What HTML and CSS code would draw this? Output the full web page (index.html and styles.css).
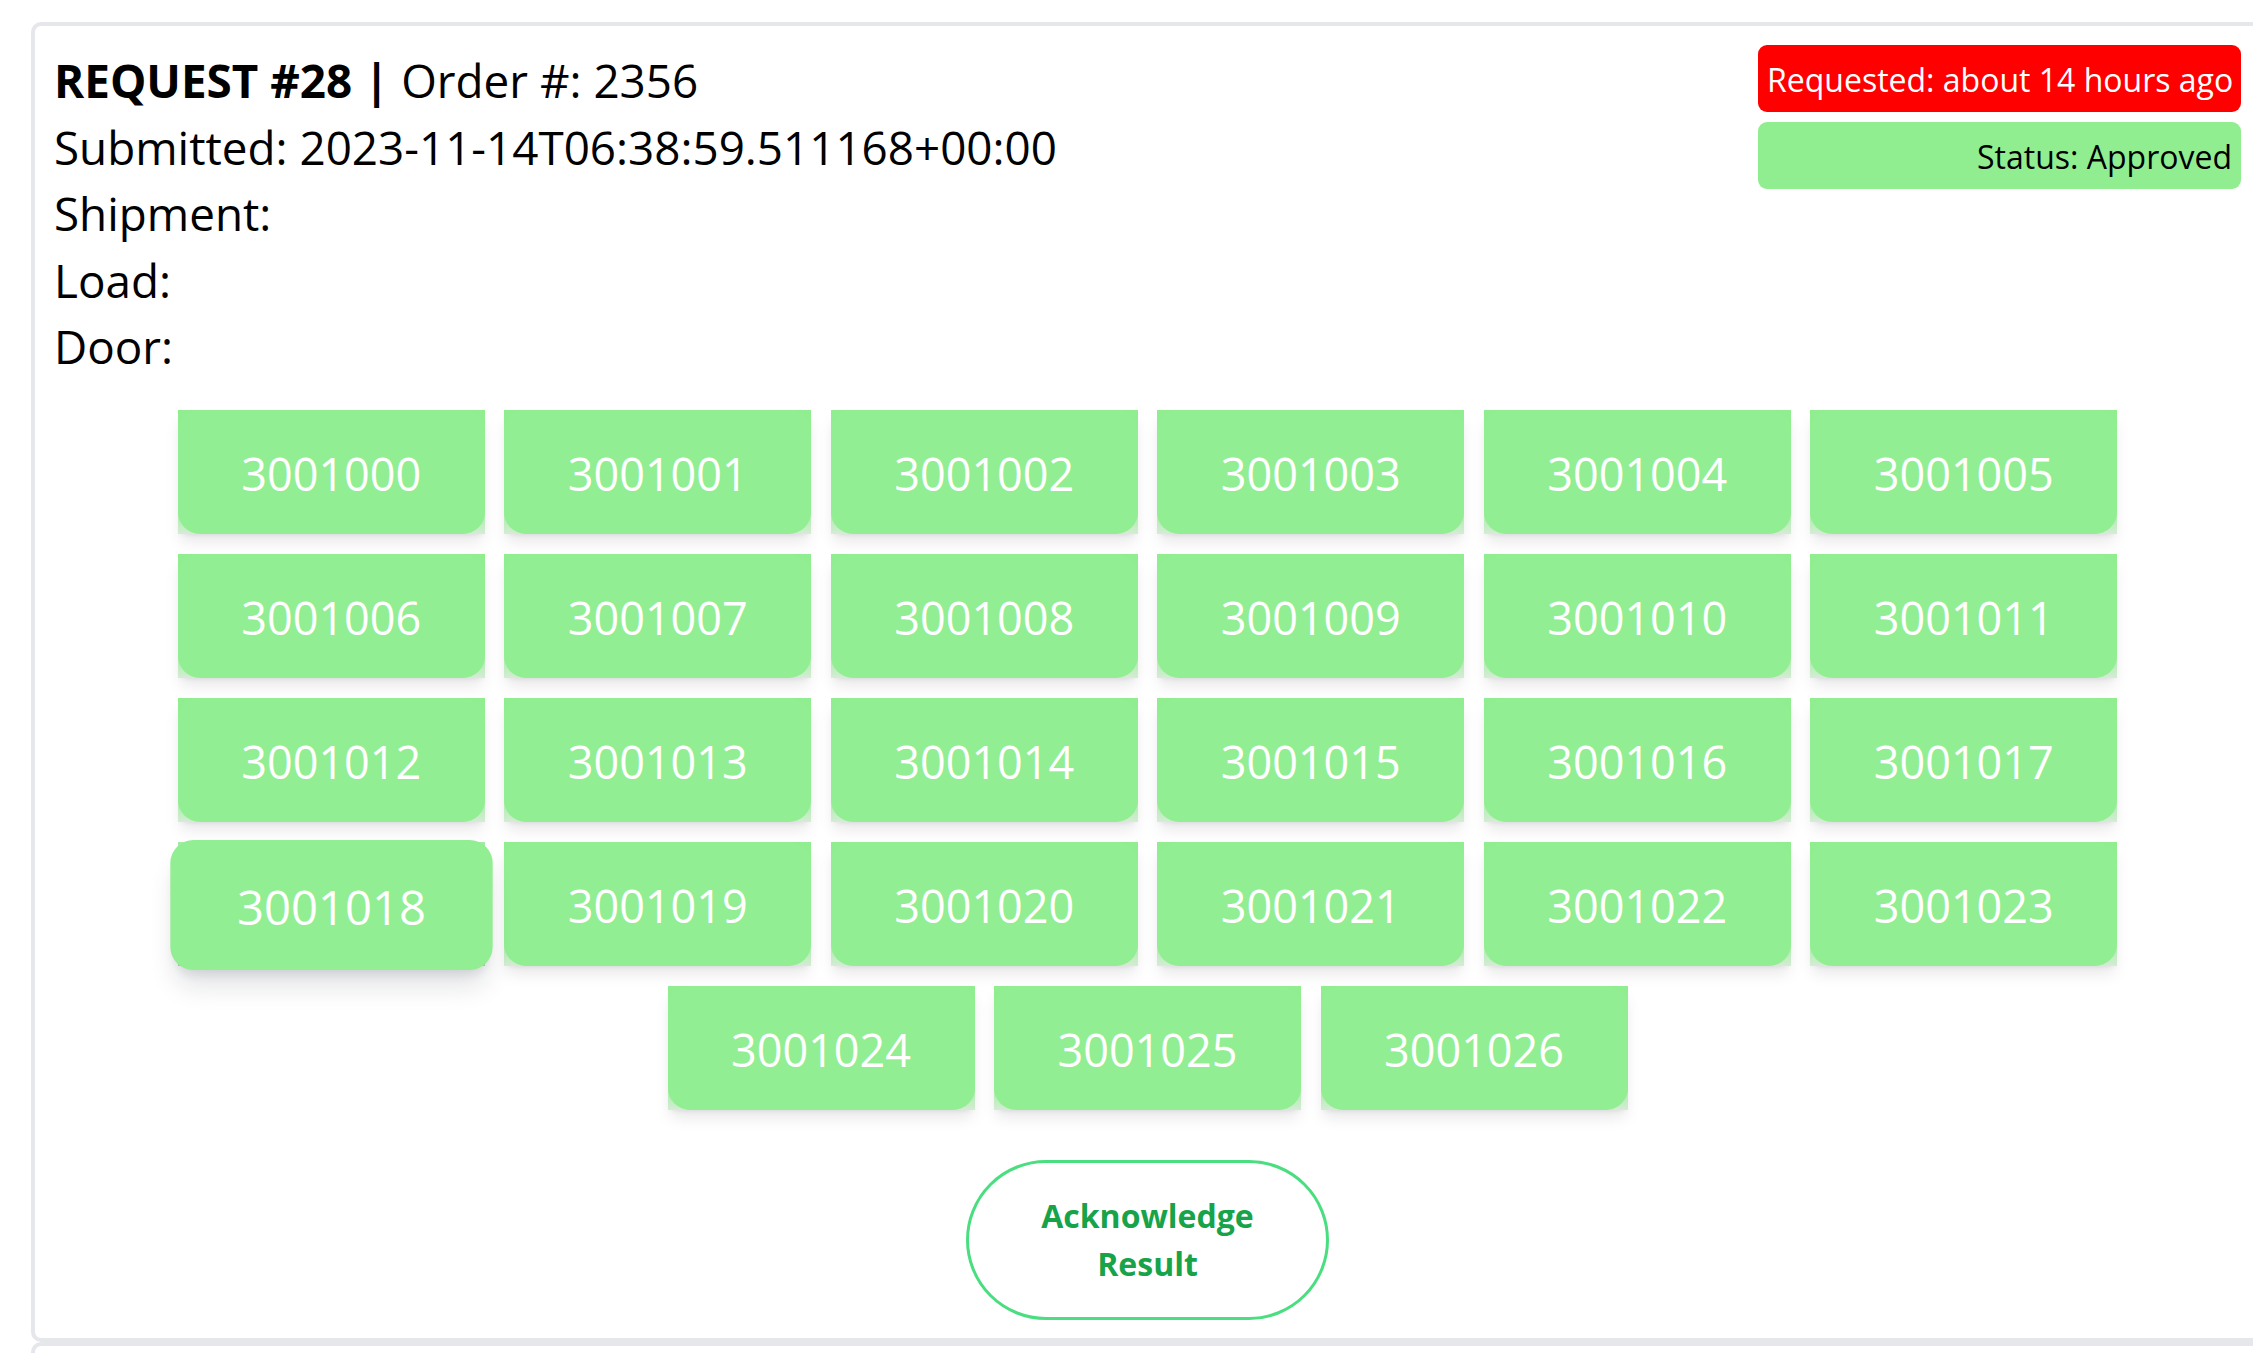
FILE: index.html
```html
<!DOCTYPE html>
<html lang="en">
<head>
<meta charset="utf-8">
<title>Request #28</title>
<link rel="stylesheet" href="styles.css">
</head>
<body>
<div class="page">
  <div class="card">
    <div class="header">
      <div class="info">
        <div class="line"><span class="strong">REQUEST #28 |</span> Order #: 2356</div>
        <div class="line">Submitted: 2023-11-14T06:38:59.511168+00:00</div>
        <div class="line">Shipment:</div>
        <div class="line">Load:</div>
        <div class="line">Door:</div>
      </div>
      <div class="badges">
        <div class="badge badge-red">Requested: about 14 hours ago</div>
        <div class="badge badge-green">Status: Approved</div>
      </div>
    </div>
    <div class="grid">
      <div class="cell"><div class="cell-inner">3001000</div></div>
      <div class="cell"><div class="cell-inner">3001001</div></div>
      <div class="cell"><div class="cell-inner">3001002</div></div>
      <div class="cell"><div class="cell-inner">3001003</div></div>
      <div class="cell"><div class="cell-inner">3001004</div></div>
      <div class="cell"><div class="cell-inner">3001005</div></div>
      <div class="cell"><div class="cell-inner">3001006</div></div>
      <div class="cell"><div class="cell-inner">3001007</div></div>
      <div class="cell"><div class="cell-inner">3001008</div></div>
      <div class="cell"><div class="cell-inner">3001009</div></div>
      <div class="cell"><div class="cell-inner">3001010</div></div>
      <div class="cell"><div class="cell-inner">3001011</div></div>
      <div class="cell"><div class="cell-inner">3001012</div></div>
      <div class="cell"><div class="cell-inner">3001013</div></div>
      <div class="cell"><div class="cell-inner">3001014</div></div>
      <div class="cell"><div class="cell-inner">3001015</div></div>
      <div class="cell"><div class="cell-inner">3001016</div></div>
      <div class="cell"><div class="cell-inner">3001017</div></div>
      <div class="cell cell-hover"><div class="cell-inner">3001018</div></div>
      <div class="cell"><div class="cell-inner">3001019</div></div>
      <div class="cell"><div class="cell-inner">3001020</div></div>
      <div class="cell"><div class="cell-inner">3001021</div></div>
      <div class="cell"><div class="cell-inner">3001022</div></div>
      <div class="cell"><div class="cell-inner">3001023</div></div>
      <div class="cell"><div class="cell-inner">3001024</div></div>
      <div class="cell"><div class="cell-inner">3001025</div></div>
      <div class="cell"><div class="cell-inner">3001026</div></div>
    </div>
    <div class="actions">
      <button class="ack" type="button">Acknowledge Result</button>
    </div>
  </div>
  <div class="card card-next"></div>
</div>
</body>
</html>
```

FILE: styles.css
```css
html, body {
  margin: 0;
  padding: 0;
  background: #ffffff;
  overflow: hidden;
}

body {
  font-family: "Open Sans", "Noto Sans", "Liberation Sans", sans-serif;
  color: #000000;
}

.page {
  padding: 22px 0 0 31px;
  width: 2231px;
}

.card {
  box-sizing: border-box;
  width: 2231px;
  border: 4px solid #e5e7eb;
  border-radius: 10px;
  padding: 19px 17px 18px 19px;
  background: #ffffff;
}

.card-next {
  height: 120px;
  padding: 0;
}

.header {
  display: flex;
  justify-content: space-between;
  align-items: flex-start;
}

.info {
  padding-top: 2px;
  font-size: 45.8px;
  line-height: 66.5px;
}

.line {
  white-space: nowrap;
}

.strong {
  font-weight: 700;
}

.badges {
  width: 483px;
  display: flex;
  flex-direction: column;
  gap: 10px;
}

.badge {
  box-sizing: border-box;
  height: 67px;
  border-radius: 9px;
  padding: 11px 9px 8px 9px;
  font-size: 32px;
  line-height: 48px;
  text-align: right;
  white-space: nowrap;
}

.badge-red {
  background: #ff0000;
  color: #ffffff;
}

.badge-green {
  background: #90ee90;
  color: #000000;
}

.grid {
  margin-top: 30.5px;
  display: flex;
  flex-wrap: wrap;
  justify-content: center;
  row-gap: 20px;
  column-gap: 19.5px;
}

.cell {
  width: 307px;
  height: 124px;
  background: linear-gradient(180deg, #90ee90 0%, #90ee90 72%, #d4ecd4 100%);
  box-shadow: 0 10px 15px -3px rgba(17, 24, 39, 0.1), 0 4px 6px -4px rgba(17, 24, 39, 0.1);
}

.cell-inner {
  width: 100%;
  height: 100%;
  display: flex;
  align-items: center;
  justify-content: center;
  border-radius: 22px;
  background: #92ee92;
  color: #ffffff;
  font-size: 45px;
  line-height: 1;
  padding-top: 2px;
  box-sizing: border-box;
}

.cell-hover {
  background: #a6e8a6;
  box-shadow: none;
}

.cell-hover .cell-inner {
  transform: translateY(1px) scale(1.05);
  box-shadow: 0 20px 25px -5px rgba(17, 24, 39, 0.12), 0 8px 10px -6px rgba(17, 24, 39, 0.12);
}

.actions {
  margin-top: 50px;
  display: flex;
  justify-content: center;
}

.ack {
  box-sizing: border-box;
  width: 363px;
  height: 160px;
  padding: 0 60px;
  border: 3.5px solid #4ade80;
  border-radius: 80px;
  background: #ffffff;
  color: #16a34a;
  font-family: "Open Sans", "Noto Sans", "Liberation Sans", sans-serif;
  font-size: 32px;
  font-weight: 700;
  line-height: 48px;
  text-align: center;
}
```
